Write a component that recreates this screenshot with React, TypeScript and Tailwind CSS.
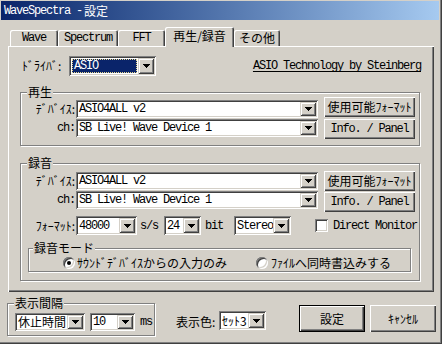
import type { ReactNode } from "react";

const JP = "font-['Noto_Sans_CJK_JP',sans-serif] text-[12px] leading-[14px] whitespace-nowrap";
const MONO =
  "font-['Liberation_Mono','Noto_Sans_CJK_JP',monospace] text-[12px] leading-[14px] tracking-[-1.2px] whitespace-nowrap";
const RAISED = "shadow-[inset_1px_1px_0_#fff,inset_-1px_-1px_0_#404040,inset_-2px_-2px_0_#808080]";
const SUNKEN =
  "shadow-[inset_1px_1px_0_#808080,inset_-1px_-1px_0_#fff,inset_2px_2px_0_#404040,inset_-2px_-2px_0_#d4d0c8]";
const ARROW_BTN =
  "shadow-[inset_1px_1px_0_#d4d0c8,inset_-1px_-1px_0_#404040,inset_2px_2px_0_#fff,inset_-2px_-2px_0_#808080]";

function Arrow() {
  return (
    <svg width="7" height="4" viewBox="0 0 7 4" shapeRendering="crispEdges">
      <path d="M0 0h7v1h-1v1h-1v1h-1v1h-1v-1h-1v-1h-1v-1h-1z" fill="#000" />
    </svg>
  );
}

function Combo({
  className,
  text,
  font = MONO,
  focused = false,
}: {
  className: string;
  text: string;
  font?: string;
  focused?: boolean;
}) {
  return (
    <div className={`flex shrink-0 bg-white p-[2px] ${SUNKEN} ${className}`}>
      {focused ? (
        <div className="flex min-w-0 flex-1 p-[1px]">
          <span
            className={`${font} flex flex-1 items-center border border-dotted border-[#e8d890] bg-[#0a246a] pl-[1px] text-white`}
          >
            {text}
          </span>
        </div>
      ) : (
        <div className="flex min-w-0 flex-1 items-center pl-[1px]">
          <span className={`${font} text-black`}>{text}</span>
        </div>
      )}
      <div className={`flex w-[16px] shrink-0 items-center justify-center bg-[#d4d0c8] ${ARROW_BTN}`}>
        <Arrow />
      </div>
    </div>
  );
}

function Btn({ className, children, font = JP }: { className: string; children: ReactNode; font?: string }) {
  return (
    <div className={`flex shrink-0 items-center justify-center bg-[#d4d0c8] text-black ${RAISED} ${className}`}>
      <span className={font}>{children}</span>
    </div>
  );
}

function Group({ label, labelPos, className, children }: { label: string; labelPos: string; className: string; children?: ReactNode }) {
  return (
    <div className={`relative shrink-0 border border-[#808080] shadow-[inset_1px_1px_0_#fff,1px_1px_0_#fff] ${className}`}>
      <span className={`${JP} absolute top-[-8px] bg-[#d4d0c8] px-[1px] text-black ${labelPos}`}>{label}</span>
      {children}
    </div>
  );
}

function Row({ label, labelFont = JP, text }: { label: string; labelFont?: string; text: string }) {
  return (
    <div className="flex h-[18px] items-center">
      <span className={`${labelFont} w-[55px] pr-[1px] text-right text-black`}>{label}</span>
      <Combo className="h-[18px] w-[242px]" text={text} />
    </div>
  );
}

function Tab({ className, children, font = MONO }: { className: string; children: ReactNode; font?: string }) {
  return (
    <div
      className={`flex h-[16px] shrink-0 items-center justify-center rounded-t-[2px] shadow-[inset_1px_1px_0_#fff,inset_-1px_0_0_#404040,inset_-2px_0_0_#808080] ${className}`}
    >
      <span className={`${font} text-black`}>{children}</span>
    </div>
  );
}

function Radio({ checked }: { checked?: boolean }) {
  return (
    <div className={`flex h-[12px] w-[12px] shrink-0 items-center justify-center rounded-full bg-white ${SUNKEN}`}>
      {checked && <div className="h-[4px] w-[4px] rounded-full bg-black" />}
    </div>
  );
}

export default function App() {
  return (
    <div className="relative h-[344px] w-[442px] overflow-hidden bg-[#d4d0c8] pl-[1px] pt-[1px] shadow-[inset_-1px_-1px_0_#404040,inset_-2px_-2px_0_#808080]">
      {/* title bar */}
      <div className="flex h-[19px] w-[438px] items-center bg-gradient-to-r from-[#0a246a] to-[#a6caf0] pl-[3px] text-white">
        <span className={MONO}>WaveSpectra -</span>
        <span className={`${JP} ml-[2px]`}>設定</span>
      </div>

      {/* tabs */}
      <div className="ml-[9px] mt-[7px] flex h-[19px] items-end">
        <Tab className="w-[48px]">Wave</Tab>
        <Tab className="w-[60px]">Spectrum</Tab>
        <Tab className="w-[47px]">FFT</Tab>
        <Tab className="relative z-10 mb-[-1px] h-[20px] w-[69px] bg-[#d4d0c8] pb-[3px]" font={JP}>
          再生/録音
        </Tab>
        <Tab className="w-[46px]" font={JP}>
          その他
        </Tab>
      </div>

      {/* panel */}
      <div className={`ml-[7px] h-[246px] w-[426px] pl-[12px] pt-[10px] ${RAISED}`}>
        <div className="flex h-[20px] w-[401px] items-center">
          <span className={`${JP} ml-[2px] w-[47px] text-black`}>ﾄﾞﾗｲﾊﾞ:</span>
          <Combo className="h-[20px] w-[87px]" focused text="ASIO" />
          <span className={`${MONO} ml-auto text-black underline underline-offset-2`}>ASIO Technology by Steinberg</span>
        </div>

        <Group label="再生" labelPos="left-[6px]" className="mt-[16px] h-[54px] w-[400px]">
          <div className="flex">
            <div className="mt-[7px] flex flex-col gap-[1px]">
              <Row label="ﾃﾞﾊﾞｲｽ:" text="ASIO4ALL v2" />
              <Row label="ch:" labelFont={MONO} text="SB Live! Wave Device 1" />
            </div>
            <div className="ml-[6px] mt-[4px] flex flex-col gap-[2px]">
              <Btn className="h-[20px] w-[91px]">使用可能ﾌｫｰﾏｯﾄ</Btn>
              <Btn className="h-[20px] w-[91px]" font={MONO}>
                Info. / Panel
              </Btn>
            </div>
          </div>
        </Group>

        <Group label="録音" labelPos="left-[6px]" className="mt-[17px] h-[118px] w-[400px]">
          <div className="flex">
            <div className="mt-[8px] flex flex-col gap-[1px]">
              <Row label="ﾃﾞﾊﾞｲｽ:" text="ASIO4ALL v2" />
              <Row label="ch:" labelFont={MONO} text="SB Live! Wave Device 1" />
            </div>
            <div className="ml-[6px] mt-[7px] flex flex-col gap-[1px]">
              <Btn className="h-[20px] w-[91px]">使用可能ﾌｫｰﾏｯﾄ</Btn>
              <Btn className="h-[20px] w-[91px]" font={MONO}>
                Info. / Panel
              </Btn>
            </div>
          </div>

          <div className="mt-[4px] flex h-[19px] items-center">
            <span className={`${JP} w-[55px] pr-[1px] text-right text-black`}>ﾌｫｰﾏｯﾄ:</span>
            <Combo className="h-[19px] w-[61px]" text="48000" />
            <span className={`${MONO} ml-[3px] text-black`}>s/s</span>
            <Combo className="ml-[6px] h-[19px] w-[37px]" text="24" />
            <span className={`${MONO} ml-[4px] text-black`}>bit</span>
            <Combo className="ml-[11px] h-[19px] w-[57px]" text="Stereo" />
            <div className={`ml-[24px] h-[13px] w-[13px] shrink-0 bg-white ${SUNKEN}`} />
            <span className={`${MONO} ml-[5px] text-black`}>Direct Monitor</span>
          </div>

          <Group label="録音モード" labelPos="left-[4px]" className="ml-[7px] mt-[13px] h-[24px] w-[383px]">
            <div className="ml-[34px] mt-[7px] flex items-center">
              <Radio checked />
              <span className={`${JP} ml-[2px] w-[179px] text-black`}>ｻｳﾝﾄﾞﾃﾞﾊﾞｲｽからの入力のみ</span>
              <Radio />
              <span className={`${JP} ml-[3px] text-black`}>ﾌｧｲﾙへ同時書込みする</span>
            </div>
          </Group>
        </Group>
      </div>

      {/* bottom row */}
      <div className="mt-[11px] flex items-start">
        <Group label="表示間隔" labelPos="left-[6px]" className="ml-[6px] h-[33px] w-[148px]">
          <div className="ml-[7px] mt-[9px] flex items-center">
            <Combo className="h-[18px] w-[70px]" text="休止時間" font={JP} />
            <Combo className="ml-[5px] h-[18px] w-[45px]" text="10" />
            <span className={`${MONO} ml-[5px] text-[11px] text-black`}>ms</span>
          </div>
        </Group>
        <div className="ml-[21px] mt-[10px] flex h-[18px] w-[43px] items-center">
          <span className={`${JP} text-black`}>表示色:</span>
        </div>
        <Combo className="mt-[8px] h-[19px] w-[47px]" text="ｾｯﾄ3" font={JP} />
        <div className={`ml-[33px] mt-[2px] flex h-[27px] w-[66px] items-center justify-center border border-black bg-[#d4d0c8] ${RAISED}`}>
          <span className={`${JP} text-black`}>設定</span>
        </div>
        <Btn className="ml-[5px] mt-[2px] h-[27px] w-[66px]">ｷｬﾝｾﾙ</Btn>
      </div>
    </div>
  );
}
